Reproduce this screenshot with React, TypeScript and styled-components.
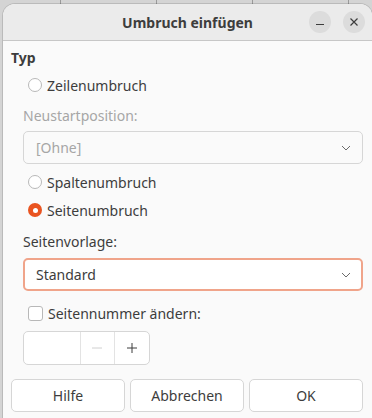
import React from "react";
import styled, { createGlobalStyle } from "styled-components";

const GlobalStyle = createGlobalStyle`
  html, body {
    margin: 0;
    padding: 0;
    background: #d4d4d4;
    font-family: "Noto Sans", "Open Sans", sans-serif;
    overflow: hidden;
  }
`;

const Backdrop = styled.div`
  width: 372px;
  height: 418px;
  padding: 4px 0 0 3px;
  box-sizing: border-box;
  background:
    repeating-linear-gradient(90deg, transparent 0 60px, #9a9a9a 60px 61px, transparent 61px 96px),
    #d4d4d4;
`;

const Dialog = styled.div`
  width: 369px;
  height: 414px;
  background: #fafafa;
  border-radius: 12px 12px 0 0;
  overflow: hidden;
  display: flex;
  flex-direction: column;
  box-shadow: 0 0 0 1px rgba(0, 0, 0, 0.12);
`;

const TitleBar = styled.div`
  height: 36px;
  flex: none;
  background: #ebebeb;
  border-bottom: 1px solid #c7c7c7;
  display: flex;
  align-items: center;
  justify-content: center;
  position: relative;
`;

const Title = styled.div`
  font-size: 14px;
  font-weight: 700;
  color: #3d3d3d;
`;

const WindowButtons = styled.div`
  position: absolute;
  right: 7px;
  top: 7px;
  display: flex;
  gap: 12px;
`;

const RoundButton = styled.div`
  width: 22px;
  height: 22px;
  border-radius: 50%;
  background: #dcdcdc;
  display: flex;
  align-items: center;
  justify-content: center;
`;

const Body = styled.div`
  padding: 7px 9px 0 8px;
  display: flex;
  flex-direction: column;
`;

const SectionTitle = styled.div`
  font-size: 14px;
  font-weight: 700;
  line-height: 20px;
  color: #3d3d3d;
`;

const Indent = styled.div`
  padding-left: 12px;
  display: flex;
  flex-direction: column;
`;

const Row = styled.div<{ $mt: number }>`
  margin-top: ${(p) => p.$mt}px;
  height: 24px;
  padding-left: 5px;
  display: flex;
  align-items: center;
  gap: 5px;
  font-size: 14px;
  color: #3d3d3d;
`;

const Radio = styled.span<{ $checked?: boolean }>`
  width: 14px;
  height: 14px;
  box-sizing: border-box;
  border-radius: 50%;
  flex: none;
  border: ${(p) => (p.$checked ? "none" : "1px solid #b8b8b8")};
  background: ${(p) => (p.$checked ? "#e95420" : "#ffffff")};
  display: flex;
  align-items: center;
  justify-content: center;
  &::after {
    content: "";
    display: ${(p) => (p.$checked ? "block" : "none")};
    width: 5px;
    height: 5px;
    border-radius: 50%;
    background: #ffffff;
  }
`;

const Checkbox = styled.span`
  width: 15px;
  height: 15px;
  box-sizing: border-box;
  border: 1px solid #b8b8b8;
  border-radius: 3px;
  background: #ffffff;
  flex: none;
`;

const Label = styled.div<{ $mt: number; $disabled?: boolean }>`
  margin-top: ${(p) => p.$mt}px;
  font-size: 14px;
  line-height: 20px;
  color: ${(p) => (p.$disabled ? "#a6a6a6" : "#3d3d3d")};
`;

const Combo = styled.div<{ $mt: number; $focused?: boolean; $disabled?: boolean }>`
  margin-top: ${(p) => p.$mt}px;
  height: 33px;
  box-sizing: border-box;
  border-radius: 5px;
  border: ${(p) => (p.$focused ? "2px solid #f0a48a" : "1px solid #d6d6d6")};
  background: ${(p) => (p.$disabled ? "#fafafa" : "#ffffff")};
  display: flex;
  align-items: center;
  justify-content: space-between;
  padding: 0 ${(p) => (p.$focused ? 10 : 11)}px 0 ${(p) => (p.$focused ? 11 : 12)}px;
  font-size: 14px;
  color: ${(p) => (p.$disabled ? "#a6a6a6" : "#3d3d3d")};
`;

const SpinBox = styled.div`
  margin-top: 6px;
  width: 127px;
  height: 34px;
  box-sizing: border-box;
  border: 1px solid #d6d6d6;
  border-radius: 5px;
  background: #ffffff;
  display: flex;
`;

const SpinEntry = styled.div`
  width: 56px;
  border-right: 1px solid #e3e3e3;
`;

const SpinButton = styled.div<{ $disabled?: boolean; $last?: boolean }>`
  width: 34px;
  border-right: ${(p) => (p.$last ? "none" : "1px solid #e3e3e3")};
  display: flex;
  align-items: center;
  justify-content: center;
  color: ${(p) => (p.$disabled ? "#d0d0d0" : "#3d3d3d")};
`;

const ButtonRow = styled.div`
  margin-top: 14px;
  display: grid;
  grid-template-columns: repeat(3, 1fr);
  gap: 5px;
`;

const Button = styled.div`
  height: 33px;
  box-sizing: border-box;
  border: 1px solid #d6d6d6;
  border-radius: 5px;
  background: #ffffff;
  display: flex;
  align-items: center;
  justify-content: center;
  font-size: 14px;
  color: #3d3d3d;
`;

const Chevron = () => (
  <svg width="10" height="6" viewBox="0 0 10 6">
    <path d="M1 1 L5 5 L9 1" fill="none" stroke="#6b6b6b" strokeWidth="1" />
  </svg>
);

export default function App() {
  return (
    <Backdrop>
      <GlobalStyle />
      <Dialog>
        <TitleBar>
          <Title>Umbruch einfügen</Title>
          <WindowButtons>
            <RoundButton>
              <svg width="10" height="10" viewBox="0 0 10 10">
                <path d="M1 7.5 H9" stroke="#3d3d3d" strokeWidth="1.2" />
              </svg>
            </RoundButton>
            <RoundButton>
              <svg width="10" height="10" viewBox="0 0 10 10">
                <path d="M1.5 1.5 L8.5 8.5 M8.5 1.5 L1.5 8.5" stroke="#3d3d3d" strokeWidth="1.2" />
              </svg>
            </RoundButton>
          </WindowButtons>
        </TitleBar>
        <Body>
          <SectionTitle>Typ</SectionTitle>
          <Indent>
            <Row $mt={5}>
              <Radio />
              Zeilenumbruch
            </Row>
            <Label $mt={9} $disabled>
              Neustartposition:
            </Label>
            <Combo $mt={5} $disabled>
              [Ohne]
              <Chevron />
            </Combo>
            <Row $mt={6}>
              <Radio />
              Spaltenumbruch
            </Row>
            <Row $mt={4}>
              <Radio $checked />
              Seitenumbruch
            </Row>
            <Label $mt={10}>Seitenvorlage:</Label>
            <Combo $mt={6} $focused>
              Standard
              <Chevron />
            </Combo>
            <Row $mt={10}>
              <Checkbox />
              Seitennummer ändern:
            </Row>
            <SpinBox>
              <SpinEntry />
              <SpinButton $disabled>
                <svg width="12" height="12" viewBox="0 0 12 12">
                  <path d="M1 6 H11" stroke="currentColor" strokeWidth="1" />
                </svg>
              </SpinButton>
              <SpinButton $last>
                <svg width="12" height="12" viewBox="0 0 12 12">
                  <path d="M1 6 H11 M6 1 V11" stroke="currentColor" strokeWidth="1" />
                </svg>
              </SpinButton>
            </SpinBox>
          </Indent>
          <ButtonRow>
            <Button>Hilfe</Button>
            <Button>Abbrechen</Button>
            <Button>OK</Button>
          </ButtonRow>
        </Body>
      </Dialog>
    </Backdrop>
  );
}
